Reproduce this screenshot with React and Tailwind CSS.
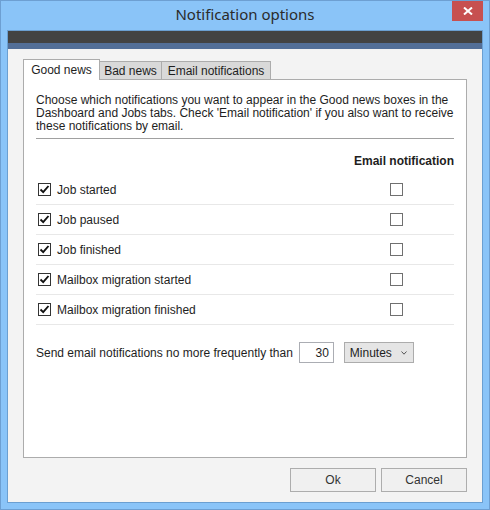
import React from 'react';

const items = [
  { label: 'Job started', checked: true, email: false },
  { label: 'Job paused', checked: true, email: false },
  { label: 'Job finished', checked: true, email: false },
  { label: 'Mailbox migration started', checked: true, email: false },
  { label: 'Mailbox migration finished', checked: true, email: false },
];

const CheckBox = ({ checked }) => (
  <span
    className={`w-[13px] h-[13px] bg-white border flex items-center justify-center ${
      checked ? 'border-[#333333]' : 'border-[#707070]'
    }`}
  >
    {checked && (
      <svg width="11" height="11" viewBox="0 0 11 11">
        <path d="M1.5 5.5 L4.2 8.2 L9.5 2" fill="none" stroke="#111" strokeWidth="1.9" />
      </svg>
    )}
  </span>
);

const App = () => {
  return (
    <div
      className="w-[490px] h-[510px] bg-[#8ac4f8] border border-[#6d9fd2] flex flex-col px-[6px] pb-[6px] text-[12px] text-[#1e1e1e]"
      style={{ fontFamily: '"Liberation Sans", Arial, sans-serif' }}
    >
      {/* Title bar */}
      <div className="relative h-[29px] flex items-center justify-center">
        <span
          className="text-[15px] text-[#2b2b2b] pb-[2px]"
          style={{ fontFamily: '"Noto Sans", "Open Sans", sans-serif' }}
        >
          Notification options
        </span>
        <button className="absolute top-0 right-0 w-[31px] h-[20px] bg-[#c75050] flex items-center justify-center">
          <svg width="10" height="8" viewBox="0 0 10 8">
            <path d="M1 0.5 L9 7.5 M9 0.5 L1 7.5" stroke="#fff" strokeWidth="2" />
          </svg>
        </button>
      </div>

      <div className="flex-1 flex flex-col border border-[#6b9fd1] bg-[#f3f3f3]">
        <div className="h-[12px] bg-[#434343]" />
        <div className="h-[6px] bg-[#536f98]" />

        <div className="flex-1 flex flex-col pt-[10px] pb-[10px] pl-[15px] pr-[15px]">
          {/* Tabs */}
          <div className="flex items-end h-[20px]">
            <div className="relative z-10 -mb-px h-[21px] w-[77px] bg-white border border-b-0 border-[#acacac] flex items-center justify-center">
              Good news
            </div>
            <div className="h-[18px] w-[62px] bg-[#d9d9d9] border border-l-0 border-b-0 border-[#acacac] flex items-center justify-center">
              Bad news
            </div>
            <div className="h-[18px] w-[109px] bg-[#d9d9d9] border border-l-0 border-b-0 border-[#acacac] flex items-center justify-center">
              Email notifications
            </div>
          </div>

          {/* Panel */}
          <div className="flex-1 bg-white border border-[#acacac] pt-[14px] px-[12px]">
            <p className="leading-[13px]">
              Choose which notifications you want to appear in the Good news boxes in the
              <br />
              Dashboard and Jobs tabs. Check 'Email notification' if you also want to receive
              <br />
              these notifications by email.
            </p>
            <div className="mt-[5px] h-px bg-[#a0a0a0]" />

            <div className="mt-[15px] flex justify-end font-bold leading-[14px]">Email notification</div>

            <div className="mt-[7px]">
              {items.map((item) => (
                <div
                  key={item.label}
                  className="h-[30px] border-b border-[#e8e8e8] flex items-center justify-between"
                >
                  <label className="flex items-center gap-[6px] pl-[2px]">
                    <CheckBox checked={item.checked} />
                    <span>{item.label}</span>
                  </label>
                  <span className="mr-[51px]">
                    <CheckBox checked={item.email} />
                  </span>
                </div>
              ))}
            </div>

            <div className="mt-[17px] flex items-center">
              <span>Send email notifications no more frequently than</span>
              <div className="ml-[6px] w-[35px] h-[21px] border border-[#abadb3] bg-white flex items-center justify-end pr-[4px]">
                30
              </div>
              <div className="ml-[10px] w-[70px] h-[21px] border border-[#acacac] bg-[#e5e5e5] flex items-center justify-between pl-[5px] pr-[6px]">
                <span>Minutes</span>
                <svg width="6" height="4" viewBox="0 0 6 4">
                  <path d="M0.5 0.5 L3 3.2 L5.5 0.5" fill="none" stroke="#555" strokeWidth="1" />
                </svg>
              </div>
            </div>
          </div>

          {/* Buttons */}
          <div className="mt-[10px] flex justify-end gap-[5px]">
            <button className="w-[86px] h-[24px] border border-[#adadad] bg-[#f0f0f0] text-[#333]">Ok</button>
            <button className="w-[86px] h-[24px] border border-[#adadad] bg-[#f0f0f0] text-[#333]">Cancel</button>
          </div>
        </div>
      </div>
    </div>
  );
};

export default App;
